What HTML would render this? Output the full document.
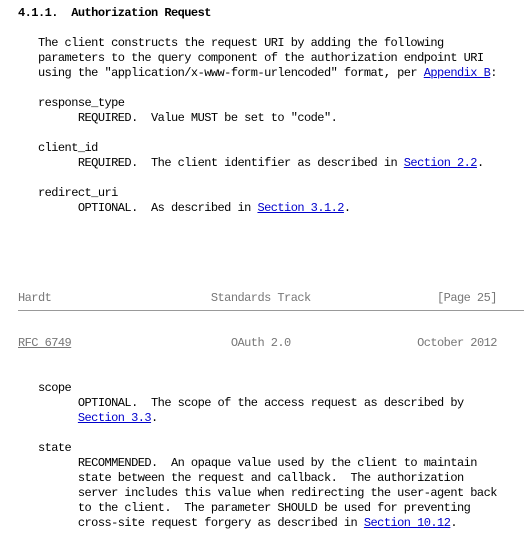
<!DOCTYPE html>
<html><head><meta charset="utf-8"><style>
html,body{margin:0;padding:0;background:#fff;width:524px;height:535px;overflow:hidden}
pre{position:absolute;left:18px;top:6px;margin:0;font-family:"Liberation Mono","Noto Sans CJK SC",monospace;font-size:12px;letter-spacing:-0.55px;line-height:15px;color:#000}
a{color:#00c;text-decoration:underline}
.g{color:#777}
.g a{color:#777}
b{font-weight:bold;color:#000}
hr{position:absolute;left:18px;right:0;top:310px;margin:0;border:0;border-top:1px solid #999}
</style></head><body>
<pre><b>4.1.1.  Authorization Request</b>

   The client constructs the request URI by adding the following
   parameters to the query component of the authorization endpoint URI
   using the "application/x-www-form-urlencoded" format, per <a>Appendix B</a>:

   response_type
         REQUIRED.  Value MUST be set to "code".

   client_id
         REQUIRED.  The client identifier as described in <a>Section 2.2</a>.

   redirect_uri
         OPTIONAL.  As described in <a>Section 3.1.2</a>.





<span class="g">Hardt                        Standards Track                   [Page 25]</span>


<span class="g"><a>RFC 6749</a>                        OAuth 2.0                   October 2012</span>


   scope
         OPTIONAL.  The scope of the access request as described by
         <a>Section 3.3</a>.

   state
         RECOMMENDED.  An opaque value used by the client to maintain
         state between the request and callback.  The authorization
         server includes this value when redirecting the user-agent back
         to the client.  The parameter SHOULD be used for preventing
         cross-site request forgery as described in <a>Section 10.12</a>.
</pre>
<hr>
</body></html>
